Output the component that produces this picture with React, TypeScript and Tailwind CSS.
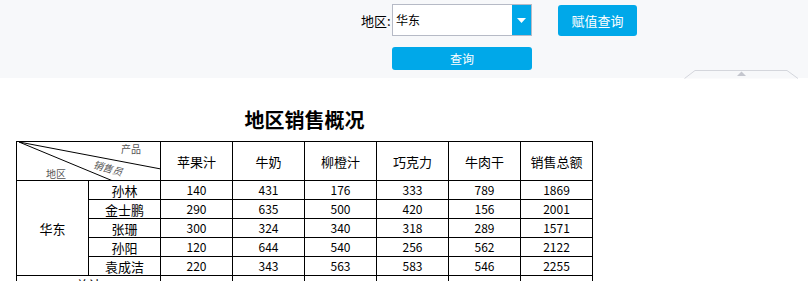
import React from "react";

const products = ["苹果汁", "牛奶", "柳橙汁", "巧克力", "牛肉干", "销售总额"];

const rows = [
  { name: "孙林", values: [140, 431, 176, 333, 789, 1869] },
  { name: "金士鹏", values: [290, 635, 500, 420, 156, 2001] },
  { name: "张珊", values: [300, 324, 340, 318, 289, 1571] },
  { name: "孙阳", values: [120, 644, 540, 256, 562, 2122] },
  { name: "袁成洁", values: [220, 343, 563, 583, 546, 2255] },
];

const cell = "border border-black text-center p-0";

export default function App() {
  return (
    <div
      className="w-[808px] h-[281px] overflow-hidden bg-white text-black"
      style={{ fontFamily: '"Noto Sans CJK SC", "Noto Sans", sans-serif' }}
    >
      {/* Toolbar */}
      <div className="relative h-[78px] bg-[#f7f8fa]">
        <div className="flex pl-[361px] pt-[4px]">
          <div className="flex flex-col">
            <div className="flex items-center">
              <span className="w-[31px] text-[13px] leading-none">地区:</span>
              <div className="flex h-[32px] w-[140px] border border-[#b6bac6] bg-white">
                <div className="flex-1 flex items-center pl-[3px] text-[12px]">华东</div>
                <div className="w-[19px] bg-[#00a8e9] flex items-center justify-center">
                  <svg width="9" height="5" viewBox="0 0 9 5">
                    <path d="M0 0h9L4.5 5z" fill="#fff" />
                  </svg>
                </div>
              </div>
            </div>
            <button className="ml-[31px] mt-[11px] h-[23px] w-[140px] rounded-[3px] bg-[#00a8e9] text-white text-[12px] leading-none">
              查询
            </button>
          </div>
          <button className="ml-[26px] mt-[1px] h-[31px] w-[79px] rounded-[3px] bg-[#00a8e9] text-white text-[13px] leading-none">
            赋值查询
          </button>
        </div>
        {/* collapse tab */}
        <svg
          className="absolute left-[684px] top-[70px]"
          width="115"
          height="9"
          viewBox="0 0 115 9"
        >
          <path d="M0.5 8.5L11 0.5H103L114 8.5" fill="#f7f8fa" stroke="#d4d6dc" />
          <path d="M53 6L57.5 1.5L62 6z" fill="#c4c6ce" />
        </svg>
      </div>

      {/* Report */}
      <div className="ml-[16px] w-[577px]">
        <div className="pt-[29px] h-[63px] text-center text-[20px] font-bold leading-[26px]">
          地区销售概况
        </div>
        <table className="table-fixed border-collapse w-[577px] text-[12px] leading-none">
          <colgroup>
            {Array.from({ length: 8 }).map((_, i) => (
              <col key={i} className="w-[72px]" />
            ))}
          </colgroup>
          <tbody>
            <tr className="h-[39px]">
              <td colSpan={2} className={`${cell} relative`}>
                <svg className="absolute inset-0" width="144" height="39" viewBox="0 0 144 39">
                  <line x1="2" y1="0" x2="144" y2="27" stroke="#000" strokeWidth="1" />
                  <line x1="2" y1="0" x2="96" y2="39" stroke="#000" strokeWidth="1" />
                </svg>
                <span className="absolute left-[104px] top-[2px] text-[10px] text-[#555]">产品</span>
                <span className="absolute left-[76px] top-[21px] text-[10px] text-[#555] italic rotate-[16deg]">
                  销售员
                </span>
                <span className="absolute left-[29px] top-[27px] text-[10px] text-[#555]">地区</span>
              </td>
              {products.map((p) => (
                <td key={p} className={`${cell} text-[13px]`}>
                  {p}
                </td>
              ))}
            </tr>
            {rows.map((r, i) => (
              <tr key={r.name} className="h-[19px]">
                {i === 0 && (
                  <td rowSpan={5} className={`${cell} text-[13px]`}>
                    华东
                  </td>
                )}
                <td className={`${cell} text-[13px]`}>{r.name}</td>
                {r.values.map((v, j) => (
                  <td key={j} className={cell}>
                    {v}
                  </td>
                ))}
              </tr>
            ))}
            <tr className="h-[19px]">
              <td colSpan={2} className={`${cell} text-[13px] align-top pt-[2px]`}>
                总计
              </td>
              {products.map((p) => (
                <td key={p} className={cell}></td>
              ))}
            </tr>
          </tbody>
        </table>
      </div>
    </div>
  );
}
